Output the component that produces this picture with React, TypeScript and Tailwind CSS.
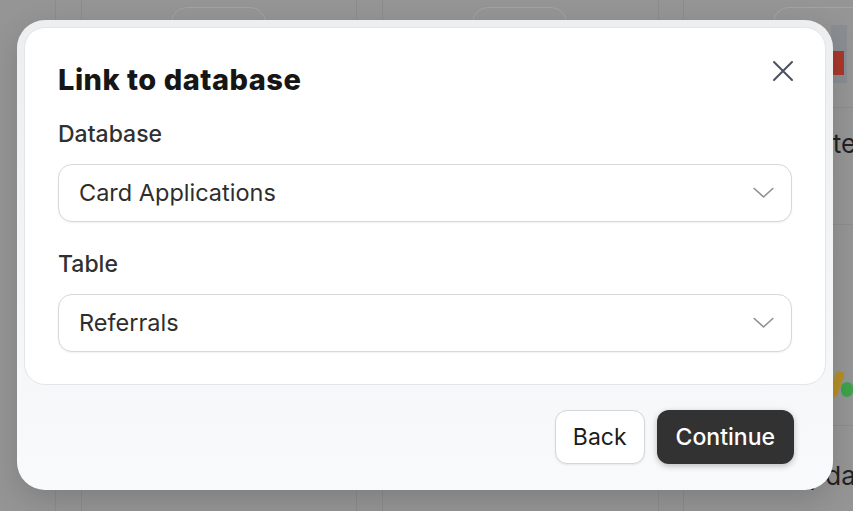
import React from 'react';

const font = { fontFamily: 'Inter, "Noto Sans", sans-serif' };

function Chevron() {
  return (
    <svg width="21" height="12" viewBox="0 0 21 12" fill="none" className="shrink-0">
      <path d="M1.2 1.5 L10.5 10 L19.8 1.5" stroke="#8e8e8e" strokeWidth="1.6" strokeLinecap="round" strokeLinejoin="round" />
    </svg>
  );
}

function SelectField({ label, value }: { label: string; value: string }) {
  return (
    <div className="flex flex-col">
      <div className="text-[23px] leading-[28px] font-medium text-[#303030]">{label}</div>
      <div className="mt-[16px] h-[58px] flex items-center justify-between rounded-[14px] border border-[#d8d8d8] bg-white pl-[20px] pr-[17px] shadow-[0_1px_2px_rgba(0,0,0,0.06)]">
        <span className="text-[23.5px] text-[#2e2e2e]">{value}</span>
        <Chevron />
      </div>
    </div>
  );
}

function Backdrop() {
  return (
    <div className="flex h-[511px] w-full bg-[#959595]">
      <div className="w-[56px] shrink-0 border-r border-[#8c8c8c]" />
      <div className="w-[26px] shrink-0 border-r border-[#8c8c8c]" />
      <div className="w-[275px] shrink-0 border-r border-[#8c8c8c] pt-[7px] pl-[89px]">
        <div className="h-[40px] w-[95px] rounded-t-[16px] border border-[#a3a3a3]" />
      </div>
      <div className="w-[26px] shrink-0 border-r border-[#8c8c8c]" />
      <div className="w-[276px] shrink-0 border-r border-[#8c8c8c] pt-[7px] pl-[89px]">
        <div className="h-[40px] w-[95px] rounded-t-[16px] border border-[#a3a3a3]" />
      </div>
      <div className="w-[25px] shrink-0 border-r border-[#8c8c8c]" />
      <div className="flex-1 flex flex-col overflow-hidden pt-[7px]">
        <div className="ml-[89px] h-[40px] rounded-tl-[16px] border-l border-t border-[#a3a3a3]" />
        <div className="ml-[147px] -mt-[22px] flex h-[58px] w-[16px] flex-col bg-[#8a8d91]">
          <div className="mt-[26px] h-[24px] w-[13px] bg-[#a8382c]" />
        </div>
        <div className="mt-[24px] border-t border-[#8c8c8c]" />
        <div className="mt-[20px] ml-[83px] whitespace-nowrap text-[26px] leading-[32px] text-[#222]" style={font}>Update</div>
        <div className="mt-[64px] border-t border-[#8c8c8c]" />
        <div className="mt-[146px] ml-[148px] flex items-end gap-[0px]">
          <div className="h-[26px] w-[11px] rotate-[20deg] rounded-[3px] bg-[#b38f2a]" />
          <div className="h-[15px] w-[15px] rounded-full bg-[#3ea24a]" />
        </div>
        <div className="mt-[28px] border-t border-[#8c8c8c]" />
        <div className="mt-[34px] ml-[106px] whitespace-nowrap text-[26px] leading-[32px] text-[#222]" style={font}>Update</div>
      </div>
    </div>
  );
}

export default function App() {
  return (
    <div className="relative h-[511px] w-[853px] overflow-hidden" style={font}>
      <Backdrop />
      <div className="absolute left-[17px] top-[20px] flex h-[470px] w-[816px] flex-col rounded-[28px] bg-gradient-to-b from-[#eceef0] to-[#f9fafb] p-[7px] shadow-[0_10px_30px_rgba(0,0,0,0.15)]">
        <div className="flex flex-col rounded-[21px] border border-[#e3e5e8] bg-white px-[33px] pt-[35px] pb-[32px]">
          <div className="flex items-start justify-between">
            <h1 className="text-[29px] leading-[34px] font-extrabold tracking-[0.5px] text-[#161616]">Link to database</h1>
            <button className="-mt-[3px] -mr-[2px] text-[#4b5160]">
              <svg width="22" height="22" viewBox="0 0 22 22" fill="none">
                <path d="M2 2 L20 20 M20 2 L2 20" stroke="currentColor" strokeWidth="2" strokeLinecap="round" />
              </svg>
            </button>
          </div>
          <div className="mt-[23px] flex flex-col gap-[28px]">
            <SelectField label="Database" value="Card Applications" />
            <SelectField label="Table" value="Referrals" />
          </div>
        </div>
        <div className="flex flex-1 items-start justify-end gap-[12px] pt-[25px] pr-[32px]">
          <button className="h-[54px] rounded-[12px] border border-[#d6d6d6] bg-white px-[17px] text-[23px] text-[#1c1c1c] shadow-[0_1px_2px_rgba(0,0,0,0.08)]">Back</button>
          <button className="h-[54px] rounded-[12px] bg-[#323232] px-[19px] text-[23px] font-medium text-white shadow-[0_2px_6px_rgba(0,0,0,0.25)]">Continue</button>
        </div>
      </div>
    </div>
  );
}
